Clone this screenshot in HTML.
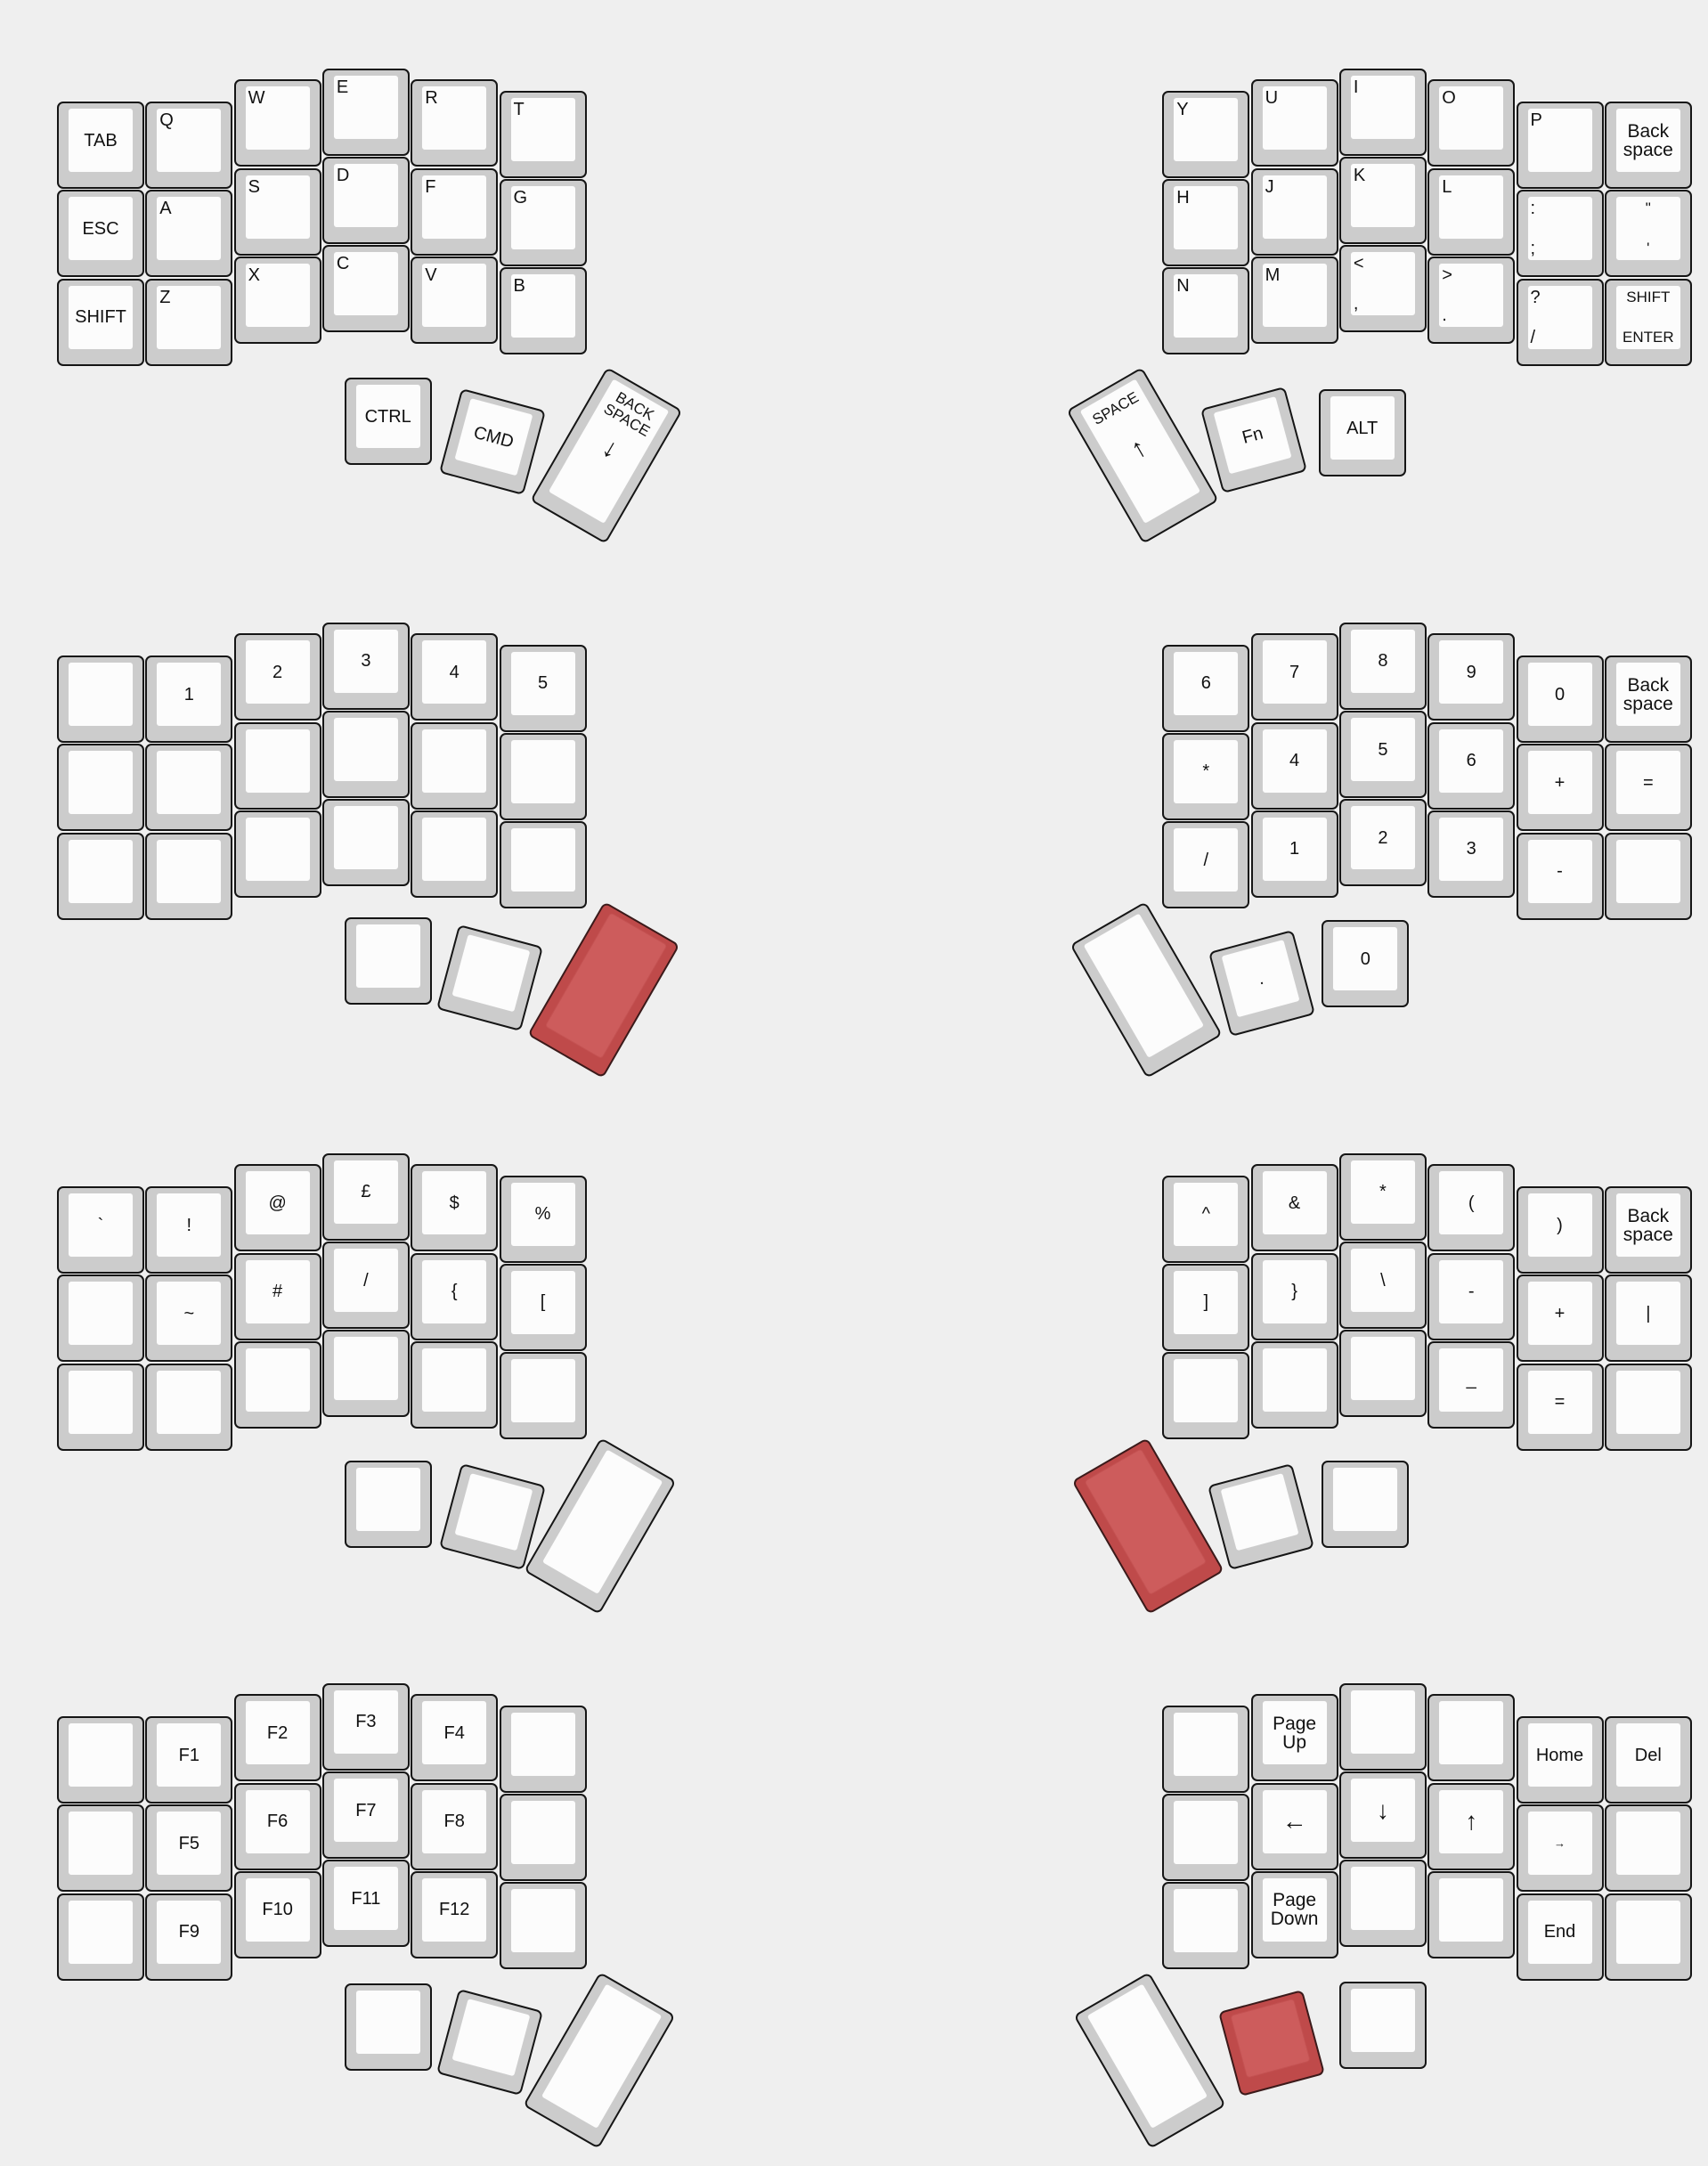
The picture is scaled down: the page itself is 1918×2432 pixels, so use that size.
<!DOCTYPE html>
<html><head><meta charset="utf-8">
<style>
body{margin:0;width:1918px;height:2432px;background:#efefef;position:relative;overflow:hidden;font-family:"Liberation Sans",sans-serif;color:#111}
.s{position:absolute;left:0}
.col{position:absolute;width:0;height:0}
.k{position:absolute;left:0;top:0;width:98px;height:98px;box-sizing:border-box;border:2px solid #151515;border-radius:7px;background:#cccccc}
.r1{top:99.3px}.r2{top:198.6px}
.tall{height:172.5px}
.i{position:absolute;left:10px;top:5px;right:10px;bottom:16px;background:#fcfcfc;border:1px solid #cdcdcd;border-radius:4px;font-size:20px;line-height:24px}
.cc{display:flex;align-items:center;justify-content:center;text-align:center}
.tl{position:absolute;left:3px;top:1px}
.bl{position:absolute;left:3px;bottom:1px}
.tc{position:absolute;left:0;right:0;top:1px;text-align:center}
.bc{position:absolute;left:0;right:0;bottom:1px;text-align:center}
.two{font-size:21px;line-height:21px}
.sm{font-size:17px}
.red{background:#bf4a4a;border-color:#3b1a1a}
.red .i{background:#cd5c5c;border-color:#c45252}
.c0{left:64px;top:0}.c1{left:163.3px;top:0}.c2{left:262.6px;top:-24.8px}.c3{left:361.9px;top:-37.2px}.c4{left:461.2px;top:-24.8px}.c5{left:560.5px;top:-12.4px}
.d0{left:1305.3px;top:-12.4px}.d1{left:1404.6px;top:-24.8px}.d2{left:1503.9px;top:-37.2px}.d3{left:1603.2px;top:-24.8px}.d4{left:1702.5px;top:0}.d5{left:1801.8px;top:0}
.big{font-size:28px}
</style></head><body>

<!-- SECTION 1 -->
<div class="s" style="top:114px">
<div class="col c0"><div class="k"><div class="i cc">TAB</div></div><div class="k r1"><div class="i cc">ESC</div></div><div class="k r2"><div class="i cc">SHIFT</div></div></div>
<div class="col c1"><div class="k"><div class="i"><span class="tl">Q</span></div></div><div class="k r1"><div class="i"><span class="tl">A</span></div></div><div class="k r2"><div class="i"><span class="tl">Z</span></div></div></div>
<div class="col c2"><div class="k"><div class="i"><span class="tl">W</span></div></div><div class="k r1"><div class="i"><span class="tl">S</span></div></div><div class="k r2"><div class="i"><span class="tl">X</span></div></div></div>
<div class="col c3"><div class="k"><div class="i"><span class="tl">E</span></div></div><div class="k r1"><div class="i"><span class="tl">D</span></div></div><div class="k r2"><div class="i"><span class="tl">C</span></div></div></div>
<div class="col c4"><div class="k"><div class="i"><span class="tl">R</span></div></div><div class="k r1"><div class="i"><span class="tl">F</span></div></div><div class="k r2"><div class="i"><span class="tl">V</span></div></div></div>
<div class="col c5"><div class="k"><div class="i"><span class="tl">T</span></div></div><div class="k r1"><div class="i"><span class="tl">G</span></div></div><div class="k r2"><div class="i"><span class="tl">B</span></div></div></div>
<div class="col d0"><div class="k"><div class="i"><span class="tl">Y</span></div></div><div class="k r1"><div class="i"><span class="tl">H</span></div></div><div class="k r2"><div class="i"><span class="tl">N</span></div></div></div>
<div class="col d1"><div class="k"><div class="i"><span class="tl">U</span></div></div><div class="k r1"><div class="i"><span class="tl">J</span></div></div><div class="k r2"><div class="i"><span class="tl">M</span></div></div></div>
<div class="col d2"><div class="k"><div class="i"><span class="tl">I</span></div></div><div class="k r1"><div class="i"><span class="tl">K</span></div></div><div class="k r2"><div class="i"><span class="tl">&lt;</span><span class="bl">,</span></div></div></div>
<div class="col d3"><div class="k"><div class="i"><span class="tl">O</span></div></div><div class="k r1"><div class="i"><span class="tl">L</span></div></div><div class="k r2"><div class="i"><span class="tl">&gt;</span><span class="bl">.</span></div></div></div>
<div class="col d4"><div class="k"><div class="i"><span class="tl">P</span></div></div><div class="k r1"><div class="i"><span class="tl">:</span><span class="bl">;</span></div></div><div class="k r2"><div class="i"><span class="tl">?</span><span class="bl">/</span></div></div></div>
<div class="col d5"><div class="k"><div class="i cc two">Back<br>space</div></div><div class="k r1"><div class="i"><span class="tc sm">"</span><span class="bc sm">'</span></div></div><div class="k r2"><div class="i sm"><span class="tc">SHIFT</span><span class="bc">ENTER</span></div></div></div>
</div>
<div class="k" style="left:386.7px;top:424px"><div class="i cc">CTRL</div></div>
<div class="k" style="left:503.75px;top:446.6px;transform:rotate(15deg)"><div class="i cc">CMD</div></div>
<div class="k tall" style="left:631.5px;top:425px;transform:rotate(30deg)"><div class="i"><span class="tc sm" style="line-height:18px;top:6px">BACK<br>SPACE</span><span class="cc" style="position:absolute;left:0;right:0;top:40%;font-size:30px">↓</span></div></div>
<div class="k tall" style="left:1233.5px;top:424.75px;transform:rotate(-30deg)"><div class="i"><span class="tc sm" style="top:6px">SPACE</span><span class="cc" style="position:absolute;left:0;right:0;top:40%;font-size:30px">↑</span></div></div>
<div class="k" style="left:1359px;top:445px;transform:rotate(-15deg)"><div class="i cc">Fn</div></div>
<div class="k" style="left:1480.7px;top:437px"><div class="i cc">ALT</div></div>

<!-- SECTION 2 -->
<div class="s" style="top:736px">
<div class="col c0"><div class="k"><div class="i"></div></div><div class="k r1"><div class="i"></div></div><div class="k r2"><div class="i"></div></div></div>
<div class="col c1"><div class="k"><div class="i cc">1</div></div><div class="k r1"><div class="i"></div></div><div class="k r2"><div class="i"></div></div></div>
<div class="col c2"><div class="k"><div class="i cc">2</div></div><div class="k r1"><div class="i"></div></div><div class="k r2"><div class="i"></div></div></div>
<div class="col c3"><div class="k"><div class="i cc">3</div></div><div class="k r1"><div class="i"></div></div><div class="k r2"><div class="i"></div></div></div>
<div class="col c4"><div class="k"><div class="i cc">4</div></div><div class="k r1"><div class="i"></div></div><div class="k r2"><div class="i"></div></div></div>
<div class="col c5"><div class="k"><div class="i cc">5</div></div><div class="k r1"><div class="i"></div></div><div class="k r2"><div class="i"></div></div></div>
<div class="col d0"><div class="k"><div class="i cc">6</div></div><div class="k r1"><div class="i cc">*</div></div><div class="k r2"><div class="i cc">/</div></div></div>
<div class="col d1"><div class="k"><div class="i cc">7</div></div><div class="k r1"><div class="i cc">4</div></div><div class="k r2"><div class="i cc">1</div></div></div>
<div class="col d2"><div class="k"><div class="i cc">8</div></div><div class="k r1"><div class="i cc">5</div></div><div class="k r2"><div class="i cc">2</div></div></div>
<div class="col d3"><div class="k"><div class="i cc">9</div></div><div class="k r1"><div class="i cc">6</div></div><div class="k r2"><div class="i cc">3</div></div></div>
<div class="col d4"><div class="k"><div class="i cc">0</div></div><div class="k r1"><div class="i cc">+</div></div><div class="k r2"><div class="i cc">-</div></div></div>
<div class="col d5"><div class="k"><div class="i cc two">Back<br>space</div></div><div class="k r1"><div class="i cc">=</div></div><div class="k r2"><div class="i"></div></div></div>
</div>
<div class="k" style="left:387px;top:1030px"><div class="i"></div></div>
<div class="k" style="left:501.4px;top:1049px;transform:rotate(15deg)"><div class="i"></div></div>
<div class="k tall red" style="left:629px;top:1025.25px;transform:rotate(30deg)"><div class="i"></div></div>
<div class="k tall" style="left:1238px;top:1025.45px;transform:rotate(-30deg)"><div class="i"></div></div>
<div class="k" style="left:1368.3px;top:1055.2px;transform:rotate(-15deg)"><div class="i cc">.</div></div>
<div class="k" style="left:1484.3px;top:1033.3px"><div class="i cc">0</div></div>

<!-- SECTION 3 -->
<div class="s" style="top:1332px">
<div class="col c0"><div class="k"><div class="i cc">`</div></div><div class="k r1"><div class="i"></div></div><div class="k r2"><div class="i"></div></div></div>
<div class="col c1"><div class="k"><div class="i cc">!</div></div><div class="k r1"><div class="i cc">~</div></div><div class="k r2"><div class="i"></div></div></div>
<div class="col c2"><div class="k"><div class="i cc">@</div></div><div class="k r1"><div class="i cc">#</div></div><div class="k r2"><div class="i"></div></div></div>
<div class="col c3"><div class="k"><div class="i cc">£</div></div><div class="k r1"><div class="i cc">/</div></div><div class="k r2"><div class="i"></div></div></div>
<div class="col c4"><div class="k"><div class="i cc">$</div></div><div class="k r1"><div class="i cc">{</div></div><div class="k r2"><div class="i"></div></div></div>
<div class="col c5"><div class="k"><div class="i cc">%</div></div><div class="k r1"><div class="i cc">[</div></div><div class="k r2"><div class="i"></div></div></div>
<div class="col d0"><div class="k"><div class="i cc">^</div></div><div class="k r1"><div class="i cc">]</div></div><div class="k r2"><div class="i"></div></div></div>
<div class="col d1"><div class="k"><div class="i cc">&amp;</div></div><div class="k r1"><div class="i cc">}</div></div><div class="k r2"><div class="i"></div></div></div>
<div class="col d2"><div class="k"><div class="i cc">*</div></div><div class="k r1"><div class="i cc">\</div></div><div class="k r2"><div class="i"></div></div></div>
<div class="col d3"><div class="k"><div class="i cc">(</div></div><div class="k r1"><div class="i cc">-</div></div><div class="k r2"><div class="i cc">_</div></div></div>
<div class="col d4"><div class="k"><div class="i cc">)</div></div><div class="k r1"><div class="i cc">+</div></div><div class="k r2"><div class="i cc">=</div></div></div>
<div class="col d5"><div class="k"><div class="i cc two">Back<br>space</div></div><div class="k r1"><div class="i cc">|</div></div><div class="k r2"><div class="i"></div></div></div>
</div>
<div class="k" style="left:387px;top:1640px"><div class="i"></div></div>
<div class="k" style="left:504px;top:1654px;transform:rotate(15deg)"><div class="i"></div></div>
<div class="k tall" style="left:625px;top:1626.75px;transform:rotate(30deg)"><div class="i"></div></div>
<div class="k tall red" style="left:1239.5px;top:1626.75px;transform:rotate(-30deg)"><div class="i"></div></div>
<div class="k" style="left:1366.6px;top:1654px;transform:rotate(-15deg)"><div class="i"></div></div>
<div class="k" style="left:1484px;top:1640px"><div class="i"></div></div>

<!-- SECTION 4 -->
<div class="s" style="top:1927px">
<div class="col c0"><div class="k"><div class="i"></div></div><div class="k r1"><div class="i"></div></div><div class="k r2"><div class="i"></div></div></div>
<div class="col c1"><div class="k"><div class="i cc">F1</div></div><div class="k r1"><div class="i cc">F5</div></div><div class="k r2"><div class="i cc">F9</div></div></div>
<div class="col c2"><div class="k"><div class="i cc">F2</div></div><div class="k r1"><div class="i cc">F6</div></div><div class="k r2"><div class="i cc">F10</div></div></div>
<div class="col c3"><div class="k"><div class="i cc">F3</div></div><div class="k r1"><div class="i cc">F7</div></div><div class="k r2"><div class="i cc">F11</div></div></div>
<div class="col c4"><div class="k"><div class="i cc">F4</div></div><div class="k r1"><div class="i cc">F8</div></div><div class="k r2"><div class="i cc">F12</div></div></div>
<div class="col c5"><div class="k"><div class="i"></div></div><div class="k r1"><div class="i"></div></div><div class="k r2"><div class="i"></div></div></div>
<div class="col d0"><div class="k"><div class="i"></div></div><div class="k r1"><div class="i"></div></div><div class="k r2"><div class="i"></div></div></div>
<div class="col d1"><div class="k"><div class="i cc two">Page<br>Up</div></div><div class="k r1"><div class="i cc big">←</div></div><div class="k r2"><div class="i cc two">Page<br>Down</div></div></div>
<div class="col d2"><div class="k"><div class="i"></div></div><div class="k r1"><div class="i cc big">↓</div></div><div class="k r2"><div class="i"></div></div></div>
<div class="col d3"><div class="k"><div class="i"></div></div><div class="k r1"><div class="i cc big">↑</div></div><div class="k r2"><div class="i"></div></div></div>
<div class="col d4"><div class="k"><div class="i cc">Home</div></div><div class="k r1"><div class="i cc" style="font-size:13px">→</div></div><div class="k r2"><div class="i cc">End</div></div></div>
<div class="col d5"><div class="k"><div class="i cc">Del</div></div><div class="k r1"><div class="i"></div></div><div class="k r2"><div class="i"></div></div></div>
</div>
<div class="k" style="left:386.7px;top:2226.7px"><div class="i"></div></div>
<div class="k" style="left:501.3px;top:2244px;transform:rotate(15deg)"><div class="i"></div></div>
<div class="k tall" style="left:623.9px;top:2226.55px;transform:rotate(30deg)"><div class="i"></div></div>
<div class="k tall" style="left:1242px;top:2226.55px;transform:rotate(-30deg)"><div class="i"></div></div>
<div class="k red" style="left:1378.5px;top:2244.7px;transform:rotate(-15deg)"><div class="i"></div></div>
<div class="k" style="left:1504px;top:2225px"><div class="i"></div></div>

</body></html>
